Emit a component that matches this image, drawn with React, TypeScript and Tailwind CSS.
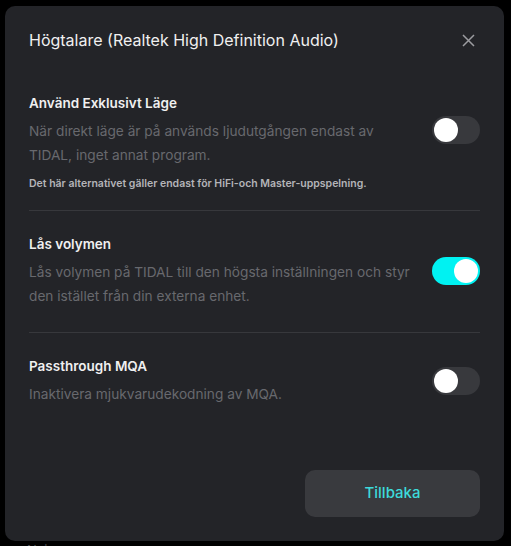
import { useState } from "react";

type Option = {
  title: string;
  lines: string[];
  note?: string;
  on: boolean;
};

const options: Option[] = [
  {
    title: "Använd Exklusivt Läge",
    lines: ["När direkt läge är på används ljudutgången endast av", "TIDAL, inget annat program."],
    note: "Det här alternativet gäller endast för HiFi-och Master-uppspelning.",
    on: false,
  },
  {
    title: "Lås volymen",
    lines: ["Lås volymen på TIDAL till den högsta inställningen och styr", "den istället från din externa enhet."],
    on: true,
  },
  {
    title: "Passthrough MQA",
    lines: ["Inaktivera mjukvarudekodning av MQA."],
    on: false,
  },
];

function Toggle({ on, onClick }: { on: boolean; onClick: () => void }) {
  return (
    <button
      onClick={onClick}
      className={`flex h-[28px] w-[48px] shrink-0 items-center rounded-full p-[2px] ${
        on ? "justify-end bg-[#00f2f2]" : "justify-start bg-[#38393d]"
      }`}
    >
      <span className="h-[24px] w-[24px] rounded-full bg-white" />
    </button>
  );
}

export default function App() {
  const [state, setState] = useState(options.map((o) => o.on));

  return (
    <div className="h-[546px] w-[511px] overflow-hidden bg-black font-['Inter',sans-serif]">
      <div className="ml-[5px] mt-[6px] flex h-[535px] w-[499px] flex-col rounded-[10px] bg-[#232428] px-6">
        <div className="flex items-center justify-between pt-[22px]">
          <h2 className="text-[16px] leading-6 text-[#f0f0f0]">Högtalare (Realtek High Definition Audio)</h2>
          <button className="mr-[5px] text-[#9c9ca0]">
            <svg width="13" height="13" viewBox="0 0 13 13" fill="none" stroke="currentColor" strokeWidth="1.5">
              <path d="M1 1l11 11M12 1L1 12" />
            </svg>
          </button>
        </div>

        <div className="mt-[40px]">
          {options.map((o, i) => (
            <div
              key={o.title}
              className={
                i === 0
                  ? "border-b border-[#37383c] pb-[18px]"
                  : i === 1
                    ? "border-b border-[#37383c] pb-[24px] pt-[22px]"
                    : "pt-[22px]"
              }
            >
              <div className="flex items-center justify-between gap-5">
                <div className="w-[395px]">
                  <div className="text-[13.5px] font-semibold leading-[22px] text-[#f0f0f0]">{o.title}</div>
                  <p className="mt-[5px] whitespace-nowrap text-[13.7px] leading-[24px] text-[#68696e]">
                    {o.lines.map((l, k) => (
                      <span key={k} className="block">
                        {l}
                      </span>
                    ))}
                  </p>
                </div>
                <Toggle
                  on={state[i]}
                  onClick={() => setState(state.map((v, j) => (j === i ? !v : v)))}
                />
              </div>
              {o.note && (
                <p className="mt-[9px] text-[10.5px] font-semibold leading-4 text-[#b4b4b8]">{o.note}</p>
              )}
            </div>
          ))}
        </div>

        <div className="mt-auto mb-[24px] flex justify-end">
          <button className="h-[47px] w-[175px] rounded-[10px] bg-[#393a3e] text-[15px] font-medium text-[#3ddada]">
            Tillbaka
          </button>
        </div>
      </div>
      <div className="mt-[1px] pl-[27px] text-[13px] leading-4 text-[#55565a]">Nej</div>
    </div>
  );
}
